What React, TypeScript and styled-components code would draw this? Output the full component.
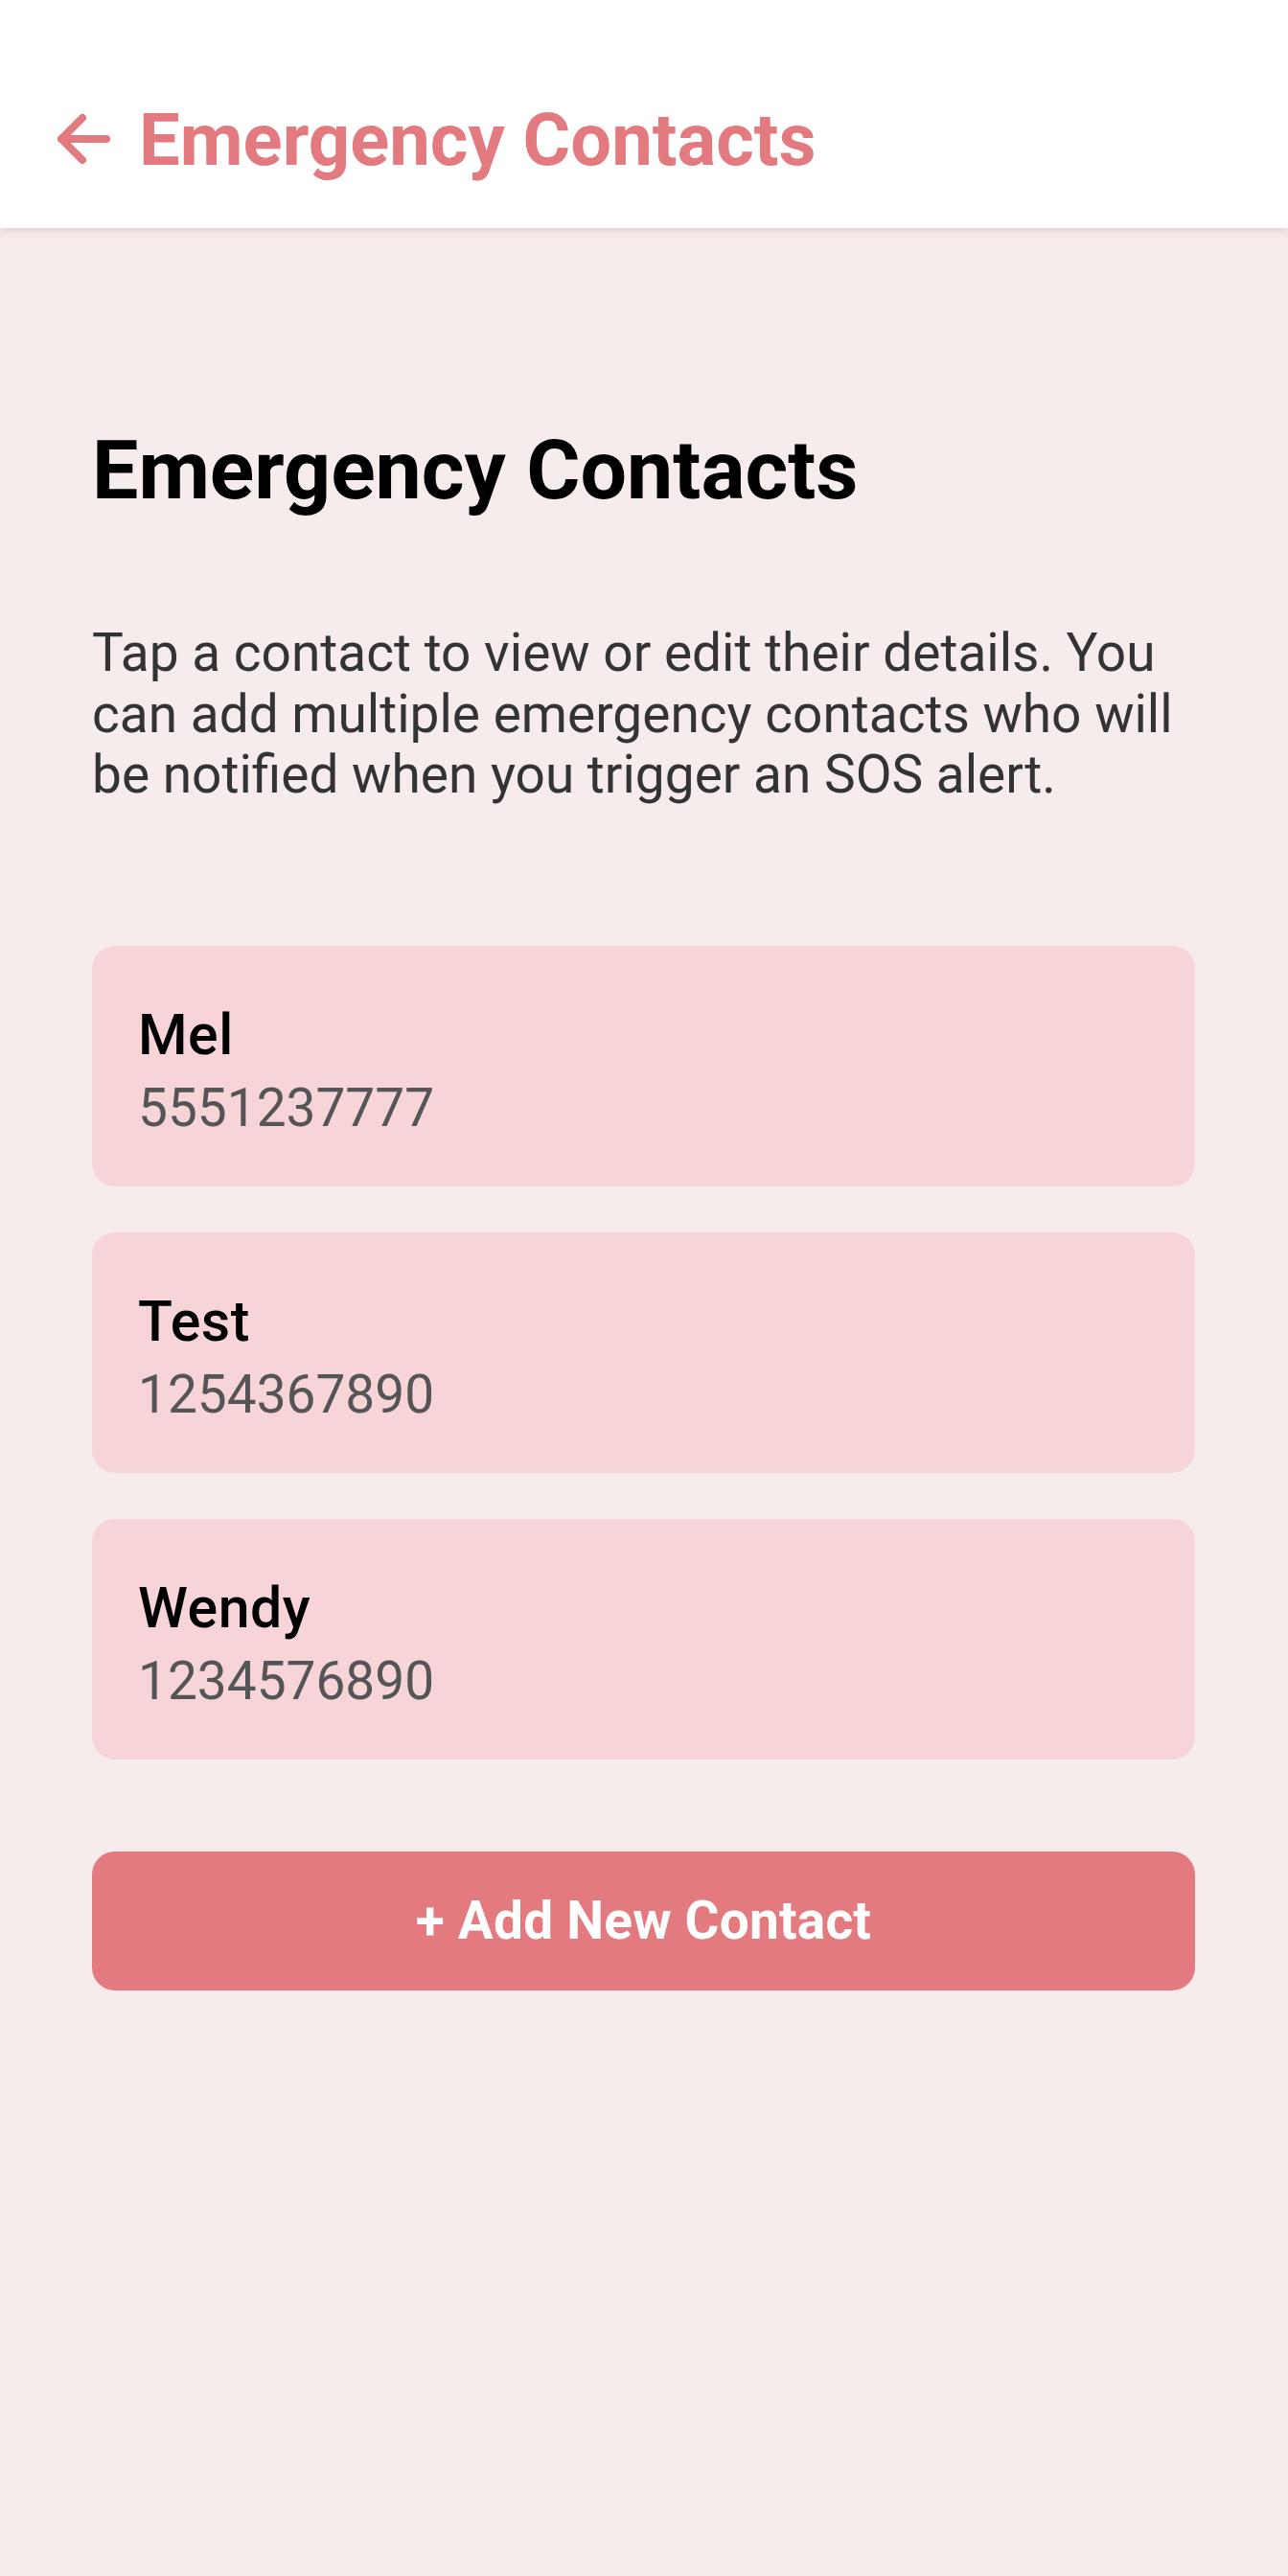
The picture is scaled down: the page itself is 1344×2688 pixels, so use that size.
import React from "react";
import styled, { createGlobalStyle } from "styled-components";

const GlobalStyle = createGlobalStyle`
  * { box-sizing: border-box; }
  html, body { margin: 0; padding: 0; }
  body {
    background: #f6ecec;
    font-family: Roboto, "Noto Sans", "Liberation Sans", sans-serif;
  }
`;

const Page = styled.div`
  min-height: 2688px;
  background: #f6ecec;
  display: flex;
  flex-direction: column;
`;

const Header = styled.header`
  height: 238px;
  background: #ffffff;
  display: flex;
  align-items: flex-end;
  padding: 0 0 47px 58px;
  gap: 29px;
  box-shadow: 0 3px 8px rgba(120, 90, 90, 0.18);
  position: relative;
  z-index: 1;
`;

const BackButton = styled.button`
  border: none;
  background: none;
  padding: 0;
  margin: 0 0 18px 0;
  width: 58px;
  height: 56px;
  display: flex;
  cursor: pointer;
`;

const HeaderTitle = styled.h1`
  margin: 0;
  font-size: 76px;
  line-height: 90px;
  font-weight: 700;
  color: #e27a7f;
`;

const Content = styled.main`
  padding: 202px 97px 0 96px;
  display: flex;
  flex-direction: column;
`;

const Title = styled.h2`
  margin: 0;
  font-size: 86px;
  line-height: 102px;
  font-weight: 700;
  color: #000;
`;

const Intro = styled.p`
  margin: 108px 0 0 0;
  font-size: 55px;
  line-height: 63.5px;
  font-weight: 400;
  color: #333333;
`;

const List = styled.div`
  margin-top: 146px;
  display: flex;
  flex-direction: column;
  gap: 48px;
`;

const Card = styled.div`
  background: #f6d4d8;
  border-radius: 24px;
  padding: 53px 48px 46px 48px;
  display: flex;
  flex-direction: column;
  cursor: pointer;
`;

const Name = styled.div`
  font-size: 59px;
  line-height: 80px;
  letter-spacing: 0.5px;
  font-weight: 500;
  color: #000;
`;

const Phone = styled.div`
  font-size: 55px;
  line-height: 72px;
  font-weight: 400;
  color: #555555;
`;

const AddButton = styled.button`
  margin-top: 96px;
  height: 145px;
  border: none;
  border-radius: 24px;
  background: #e27a7f;
  color: #ffffff;
  font-family: Roboto, "Noto Sans", "Liberation Sans", sans-serif;
  font-size: 55px;
  letter-spacing: 0.2px;
  font-weight: 700;
  cursor: pointer;
  display: flex;
  align-items: center;
  justify-content: center;
`;

const contacts = [
  { name: "Mel", phone: "5551237777" },
  { name: "Test", phone: "1254367890" },
  { name: "Wendy", phone: "1234576890" },
];

export default function App() {
  return (
    <Page>
      <GlobalStyle />
      <Header>
        <BackButton aria-label="Back">
          <svg width="58" height="56" viewBox="0 0 58 56" fill="none">
            <path
              d="M53 28 H6 M28 6 L6 28 L28 50"
              stroke="#e27a7f"
              strokeWidth="8"
              strokeLinecap="round"
              strokeLinejoin="round"
            />
          </svg>
        </BackButton>
        <HeaderTitle>Emergency Contacts</HeaderTitle>
      </Header>
      <Content>
        <Title>Emergency Contacts</Title>
        <Intro>
          Tap a contact to view or edit their details. You can add multiple
          emergency contacts who will be notified when you trigger an SOS alert.
        </Intro>
        <List>
          {contacts.map((c) => (
            <Card key={c.name}>
              <Name>{c.name}</Name>
              <Phone>{c.phone}</Phone>
            </Card>
          ))}
        </List>
        <AddButton>+ Add New Contact</AddButton>
      </Content>
    </Page>
  );
}
